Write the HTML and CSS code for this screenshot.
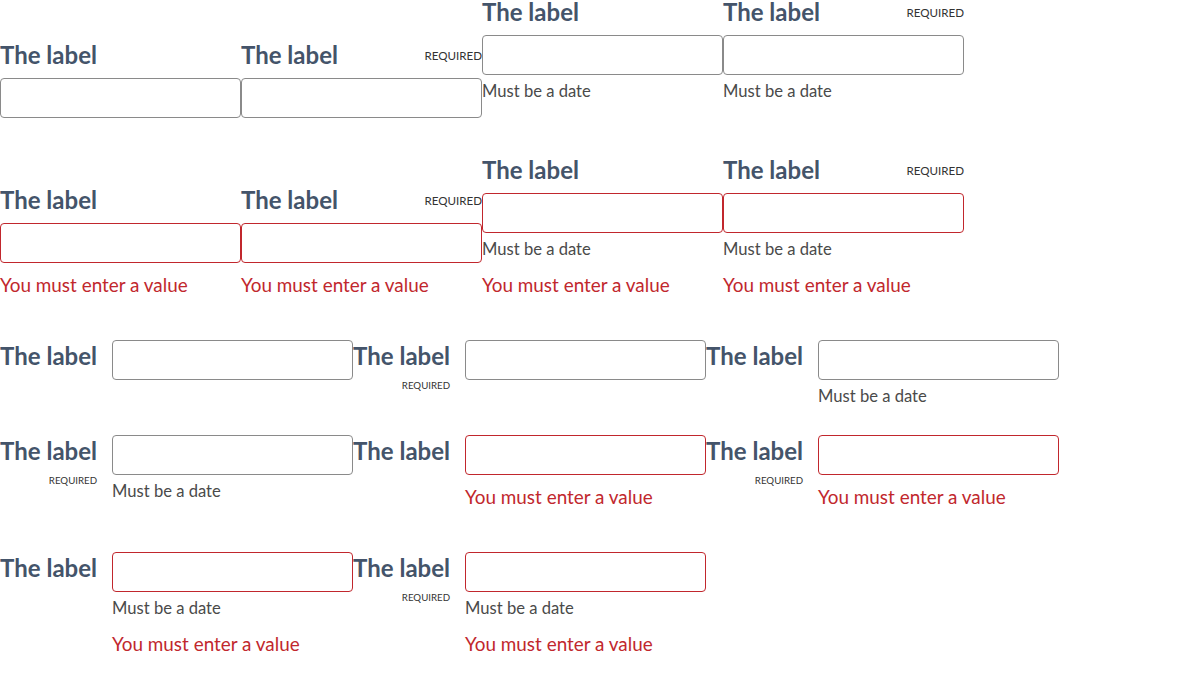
FILE: index.html
```html
<!DOCTYPE html>
<html lang="en">
<head>
<meta charset="utf-8">
<title>Text fields</title>
<link rel="stylesheet" href="styles.css">
</head>
<body>
<main class="demo">

  <section class="row row--stacked">
    <div class="field field--stacked">
      <div class="field__head"><label class="field__label" for="a1">The label</label></div>
      <input class="field__input" id="a1" type="text">
    </div>
    <div class="field field--stacked">
      <div class="field__head"><label class="field__label" for="a2">The label</label><span class="field__req">Required</span></div>
      <input class="field__input" id="a2" type="text">
    </div>
    <div class="field field--stacked">
      <div class="field__head"><label class="field__label" for="a3">The label</label></div>
      <input class="field__input" id="a3" type="text">
      <div class="field__messages"><div class="field__hint">Must be a date</div></div>
    </div>
    <div class="field field--stacked">
      <div class="field__head"><label class="field__label" for="a4">The label</label><span class="field__req">Required</span></div>
      <input class="field__input" id="a4" type="text">
      <div class="field__messages"><div class="field__hint">Must be a date</div></div>
    </div>
  </section>

  <section class="row row--stacked row--s2">
    <div class="field field--stacked field--invalid">
      <div class="field__head"><label class="field__label" for="b1">The label</label></div>
      <input class="field__input" id="b1" type="text">
      <div class="field__messages"><div class="field__error">You must enter a value</div></div>
    </div>
    <div class="field field--stacked field--invalid">
      <div class="field__head"><label class="field__label" for="b2">The label</label><span class="field__req">Required</span></div>
      <input class="field__input" id="b2" type="text">
      <div class="field__messages"><div class="field__error">You must enter a value</div></div>
    </div>
    <div class="field field--stacked field--invalid">
      <div class="field__head"><label class="field__label" for="b3">The label</label></div>
      <input class="field__input" id="b3" type="text">
      <div class="field__messages"><div class="field__hint">Must be a date</div><div class="field__error">You must enter a value</div></div>
    </div>
    <div class="field field--stacked field--invalid">
      <div class="field__head"><label class="field__label" for="b4">The label</label><span class="field__req">Required</span></div>
      <input class="field__input" id="b4" type="text">
      <div class="field__messages"><div class="field__hint">Must be a date</div><div class="field__error">You must enter a value</div></div>
    </div>
  </section>

  <section class="row row--inline row--s3">
    <div class="field field--inline">
      <div class="field__head"><label class="field__label" for="c1">The label</label></div>
      <div class="field__control"><input class="field__input" id="c1" type="text"></div>
    </div>
    <div class="field field--inline">
      <div class="field__head"><label class="field__label" for="c2">The label</label><span class="field__req">Required</span></div>
      <div class="field__control"><input class="field__input" id="c2" type="text"></div>
    </div>
    <div class="field field--inline">
      <div class="field__head"><label class="field__label" for="c3">The label</label></div>
      <div class="field__control"><input class="field__input" id="c3" type="text">
        <div class="field__messages"><div class="field__hint">Must be a date</div></div></div>
    </div>
  </section>

  <section class="row row--inline row--s4">
    <div class="field field--inline">
      <div class="field__head"><label class="field__label" for="d1">The label</label><span class="field__req">Required</span></div>
      <div class="field__control"><input class="field__input" id="d1" type="text">
        <div class="field__messages"><div class="field__hint">Must be a date</div></div></div>
    </div>
    <div class="field field--inline field--invalid">
      <div class="field__head"><label class="field__label" for="d2">The label</label></div>
      <div class="field__control"><input class="field__input" id="d2" type="text">
        <div class="field__messages"><div class="field__error">You must enter a value</div></div></div>
    </div>
    <div class="field field--inline field--invalid">
      <div class="field__head"><label class="field__label" for="d3">The label</label><span class="field__req">Required</span></div>
      <div class="field__control"><input class="field__input" id="d3" type="text">
        <div class="field__messages"><div class="field__error">You must enter a value</div></div></div>
    </div>
  </section>

  <section class="row row--inline row--s5">
    <div class="field field--inline field--invalid">
      <div class="field__head"><label class="field__label" for="e1">The label</label></div>
      <div class="field__control"><input class="field__input" id="e1" type="text">
        <div class="field__messages"><div class="field__hint">Must be a date</div><div class="field__error">You must enter a value</div></div></div>
    </div>
    <div class="field field--inline field--invalid">
      <div class="field__head"><label class="field__label" for="e2">The label</label><span class="field__req">Required</span></div>
      <div class="field__control"><input class="field__input" id="e2" type="text">
        <div class="field__messages"><div class="field__hint">Must be a date</div><div class="field__error">You must enter a value</div></div></div>
    </div>
  </section>

</main>
</body>
</html>
```

FILE: styles.css
```css
* { box-sizing: border-box; }

html, body {
  margin: 0;
  padding: 0;
  background: #ffffff;
}

body {
  font-family: Lato, "Liberation Sans", sans-serif;
  color: #4a4a4a;
}

.row { display: flex; }
.row--stacked { align-items: flex-end; }
.row--inline { align-items: flex-start; }

.row--s2 { margin-top: 40px; }
.row--s3 { margin-top: 28px; }
.row--s4 { margin-top: 25px; }
.row--s5 { margin-top: 41px; }

/* shared field parts */
.field__label {
  font-size: 24px;
  font-weight: 700;
  line-height: 24px;
  color: #44546a;
  white-space: nowrap;
}

.field__req {
  font-size: 11.6px;
  line-height: 22px;
  text-transform: uppercase;
  color: #333333;
  white-space: nowrap;
}

.field__input {
  display: block;
  width: 100%;
  height: 40px;
  margin: 0;
  padding: 0 8px;
  border: 1px solid #8a8a8a;
  border-radius: 4px;
  background: #ffffff;
  font: inherit;
  font-size: 18px;
  color: #333333;
}

.field--invalid .field__input { border-color: #c1272d; }

.field__hint {
  margin-top: 2px;
  font-size: 16.6px;
  line-height: 28px;
  color: #4a4a4a;
  white-space: nowrap;
}

.field__error {
  margin-top: 8px;
  font-size: 18.9px;
  line-height: 28px;
  color: #c1272d;
  white-space: nowrap;
}

/* stacked (label above) */
.field--stacked { width: 241px; flex: 0 0 241px; }

.field--stacked .field__head {
  display: flex;
  justify-content: space-between;
  align-items: flex-end;
  margin-bottom: 11px;
}

.field--stacked .field__messages { padding-bottom: 13px; }

/* inline (label beside) */
.field--inline {
  display: flex;
  gap: 15px;
  width: 353px;
  flex: 0 0 353px;
}

.field--inline .field__head {
  flex: 0 0 97px;
  display: flex;
  flex-direction: column;
  align-items: flex-end;
}

.field--inline .field__label { line-height: 32px; }

.field--inline .field__req {
  margin-top: 6px;
  font-size: 9.7px;
  line-height: 14px;
}

.field__control { flex: 0 0 241px; }
```
